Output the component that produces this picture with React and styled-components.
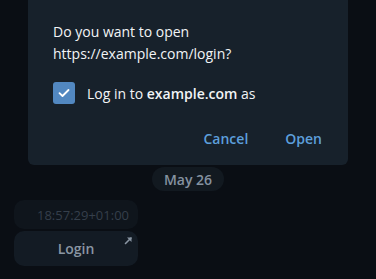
import React from "react";
import styled, { createGlobalStyle } from "styled-components";

const Global = createGlobalStyle`
  html, body { margin: 0; padding: 0; background: #0a0e14; }
  body { font-family: "Open Sans", "Noto Sans", sans-serif; width: 376px; height: 279px; overflow: hidden; }
`;

const Page = styled.div`
  width: 376px;
  height: 279px;
  display: flex;
  flex-direction: column;
  background: #0a0e14;
`;

const Dialog = styled.div`
  margin-left: 28px;
  width: 320px;
  height: 165px;
  box-sizing: border-box;
  background: #17212b;
  border-radius: 0 0 6px 6px;
  padding: 21px 26px 0 25px;
  display: flex;
  flex-direction: column;
  color: #f5f5f5;
`;

const Question = styled.div`
  font-size: 14px;
  line-height: 22px;
  color: #f2f4f6;
`;

const CheckRow = styled.label`
  display: flex;
  align-items: center;
  gap: 12px;
  margin-top: 17px;
  font-size: 14px;
  color: #f2f4f6;
  b { font-weight: 600; }
`;

const Box = styled.span`
  width: 22px;
  height: 22px;
  border-radius: 3px;
  background: #5288c1;
  display: flex;
  align-items: center;
  justify-content: center;
  flex-shrink: 0;
`;

const Actions = styled.div`
  display: flex;
  justify-content: flex-end;
  gap: 37px;
  margin-top: 25px;
`;

const TextButton = styled.button`
  background: none;
  border: none;
  padding: 0;
  font-family: inherit;
  font-size: 14px;
  font-weight: 600;
  color: #5d9fdb;
  line-height: 20px;
  cursor: pointer;
`;

const DateRow = styled.div`
  display: flex;
  justify-content: center;
  margin-top: 2px;
`;

const DatePill = styled.div`
  height: 24px;
  padding: 0 12px;
  border-radius: 12px;
  background: #121920;
  color: #8592a0;
  font-size: 14px;
  font-weight: 600;
  display: flex;
  align-items: center;
`;

const Message = styled.div`
  margin: 9px 0 0 14px;
  width: 124px;
  display: flex;
  flex-direction: column;
  gap: 2px;
`;

const TimeBubble = styled.div`
  height: 29px;
  border-radius: 10px;
  background: #0f151c;
  color: #353f4b;
  font-size: 13px;
  display: flex;
  align-items: center;
  justify-content: flex-end;
  padding-right: 9px;
`;

const InlineButton = styled.div`
  position: relative;
  height: 35px;
  border-radius: 10px;
  background: #131b24;
  color: #8a96a3;
  font-size: 14px;
  font-weight: 600;
  display: flex;
  align-items: center;
  justify-content: center;
`;

const Corner = styled.svg`
  position: absolute;
  top: 5px;
  right: 5px;
`;

export default function App() {
  return (
    <Page>
      <Global />
      <Dialog>
        <Question>
          Do you want to open
          <br />
          https://example.com/login?
        </Question>
        <CheckRow>
          <Box>
            <svg width="12" height="10" viewBox="0 0 12 10">
              <path d="M1.5 5.2 L4.5 8 L10.5 2" fill="none" stroke="#fff" strokeWidth="1.8" strokeLinecap="round" strokeLinejoin="round" />
            </svg>
          </Box>
          <span>
            Log in to <b>example.com</b> as
          </span>
        </CheckRow>
        <Actions>
          <TextButton>Cancel</TextButton>
          <TextButton>Open</TextButton>
        </Actions>
      </Dialog>
      <DateRow>
        <DatePill>May 26</DatePill>
      </DateRow>
      <Message>
        <TimeBubble>18:57:29+01:00</TimeBubble>
        <InlineButton>
          Login
          <Corner width="9" height="9" viewBox="0 0 9 9">
            <path d="M1.5 7.5 L7 2" stroke="#8a96a3" strokeWidth="1.6" strokeLinecap="round" />
            <path d="M3 1.5 L7.5 1.5 L7.5 6 Z" fill="#8a96a3" />
          </Corner>
        </InlineButton>
      </Message>
    </Page>
  );
}
